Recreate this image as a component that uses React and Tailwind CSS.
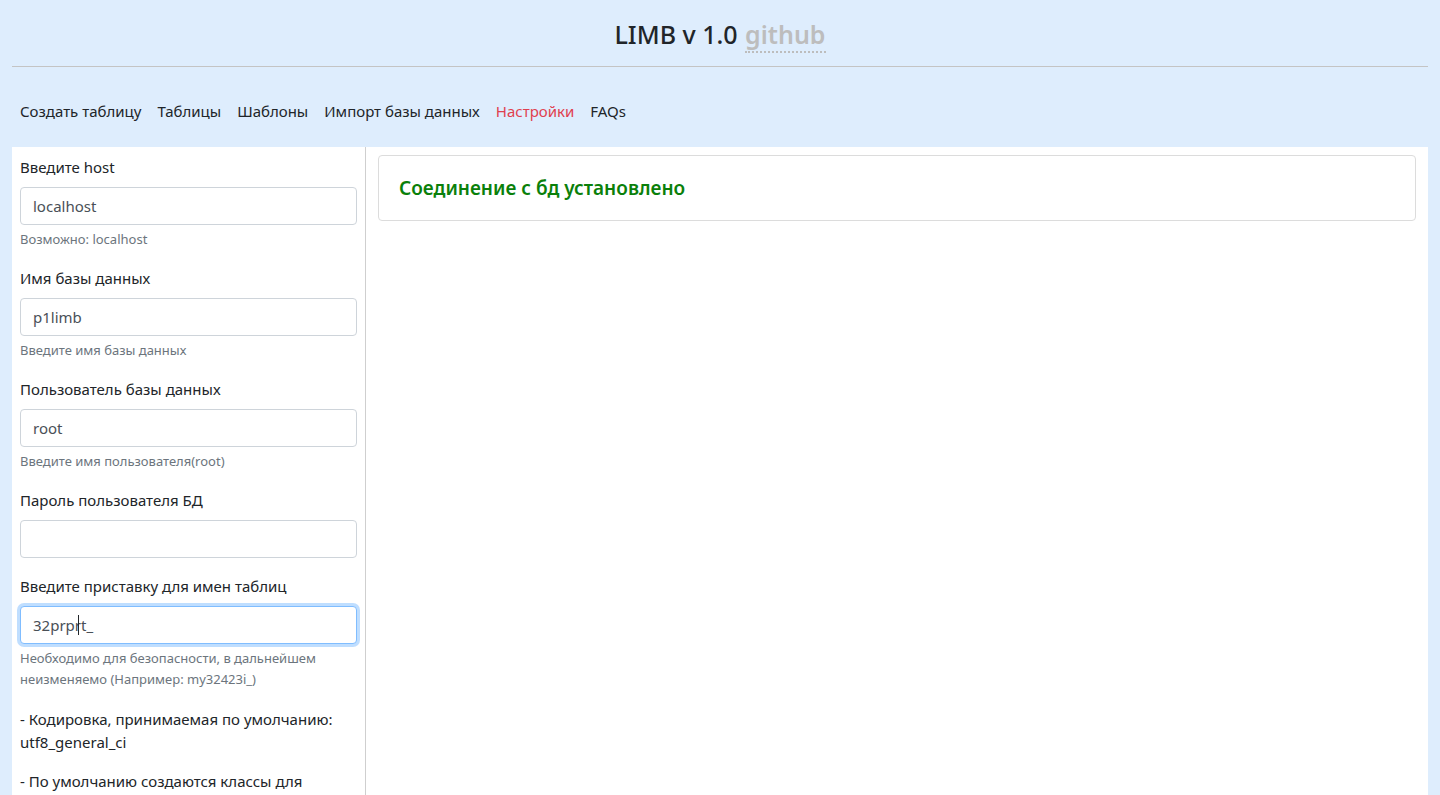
import React from "react";

const font = { fontFamily: '"Noto Sans", "Open Sans", sans-serif' };

const navItems = [
  { label: "Создать таблицу" },
  { label: "Таблицы" },
  { label: "Шаблоны" },
  { label: "Импорт базы данных" },
  { label: "Настройки", active: true },
  { label: "FAQs" },
];

function Field({ label, value, help }) {
  return (
    <div className="mb-4">
      <label className="block text-[15px] leading-6 mb-2 text-[#212529]">{label}</label>
      <input
        type="text"
        defaultValue={value}
        className="h-[38px] w-full rounded border border-[#ced4da] bg-white px-3 text-[15px] text-[#495057] outline-none"
        style={font}
      />
      {help && (
        <div className="mt-1 text-[13px] leading-[21px] text-[#6c757d]">{help}</div>
      )}
    </div>
  );
}

export default function App() {
  return (
    <div className="min-h-screen bg-[#deedfd] px-3 text-[#212529]" style={font}>
      <header className="pt-[16px] text-center">
        <h1 className="text-[25px] leading-[36px] font-medium">
          LIMB v 1.0{" "}
          <a className="ml-[1px] text-[#bdbdbd] border-b-2 border-dotted border-[#bdbdbd] font-semibold">github</a>
        </h1>
      </header>
      <hr className="mt-[14px] border-t border-[#c4c4c4]" />
      <nav className="flex gap-4 px-2 pt-[32px] pb-6 text-[15px] leading-6">
        {navItems.map((item) => (
          <a
            key={item.label}
            className={item.active ? "text-[#e0404f]" : "text-[#212529]"}
          >
            {item.label}
          </a>
        ))}
      </nav>

      <div className="flex bg-white h-[648px] overflow-hidden">
        <aside className="w-[354px] shrink-0 border-r border-[#cfcfcf] px-2 pt-2">
          <Field label="Введите host" value="localhost" help="Возможно: localhost" />
          <Field label="Имя базы данных" value="p1limb" help="Введите имя базы данных" />
          <Field label="Пользователь базы данных" value="root" help="Введите имя пользователя(root)" />
          <Field label="Пароль пользователя БД" value="" />
          <div className="mb-[18px]">
            <label className="block text-[15px] leading-6 mb-2">Введите приставку для имен таблиц</label>
            <div className="h-[38px] w-full rounded border border-[#80bdff] bg-white px-3 flex items-center text-[15px] text-[#495057] shadow-[0_0_0_3px_rgba(0,123,255,0.25)]">
              <span>32prpr</span>
              <span className="inline-block w-px h-[20px] bg-[#212529] -ml-[3px] mr-[2px]"></span>
              <span>t_</span>
            </div>
            <div className="mt-1 text-[13px] leading-[21px] text-[#6c757d]">
              Необходимо для безопасности, в дальнейшем неизменяемо (Например: my32423i_)
            </div>
          </div>
          <p className="text-[15px] leading-[23px] mb-4">
            - Кодировка, принимаемая по умолчанию: utf8_general_ci
          </p>
          <p className="text-[15px] leading-[23px] mb-4">
            - По умолчанию создаются классы для работы с таблицами базы данных
          </p>
        </aside>

        <main className="flex-1 px-3 pt-2">
          <div className="rounded border border-[#dcdcdc] px-5 py-[20px]">
            <h2 className="text-[19px] leading-[24px] font-semibold text-[#0a800a]">
              Соединение с бд установлено
            </h2>
          </div>
        </main>
      </div>
    </div>
  );
}
